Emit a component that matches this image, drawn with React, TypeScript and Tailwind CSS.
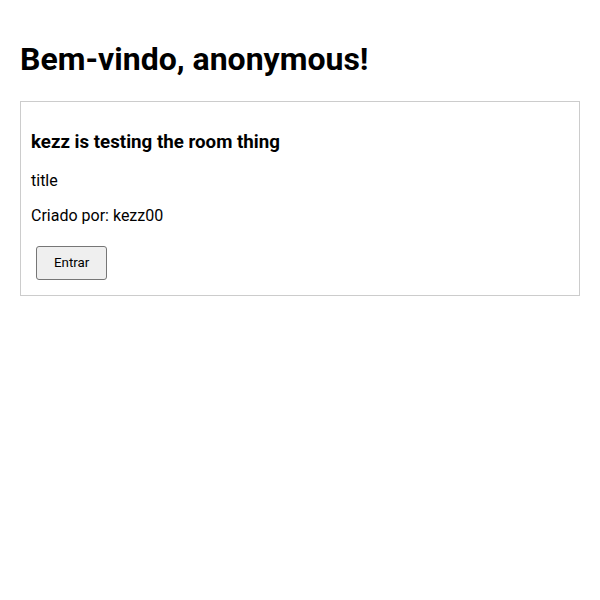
export default function App() {
  return (
    <div className="p-5 font-['Roboto',sans-serif] text-black bg-white">
      <h1 className="mt-[21.44px] mb-[22px] text-[32px] font-bold leading-[1.17]">
        Bem-vindo, anonymous!
      </h1>
      <div className="border border-[#cccccc] p-2.5">
        <h3 className="mt-[19px] mb-[17px] text-[18.72px] font-bold leading-[1.25]">
          kezz is testing the room thing
        </h3>
        <p className="my-4 text-base leading-[1.2]">title</p>
        <p className="mt-4 mb-[15px] text-base leading-[1.2]">Criado por: kezz00</p>
        <button className="m-[5px] h-[34px] px-[17px] text-[13.33px] leading-[16px] bg-[#efefef] border border-[#767676] rounded-[3px]">
          Entrar
        </button>
      </div>
    </div>
  );
}
